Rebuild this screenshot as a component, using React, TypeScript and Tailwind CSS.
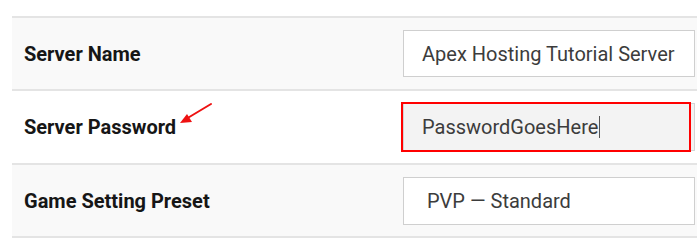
import React from "react";

const font = { fontFamily: "Roboto, 'Liberation Sans', sans-serif" };

export default function App() {
  return (
    <div className="w-[700px] h-[244px] bg-white overflow-hidden pt-[16px] pl-[12px]" style={font}>
      <div className="w-[685px] border-b-2 border-[#e4e4e4]">
        {/* Row 1 */}
        <div className="h-[73px] border-t-2 border-[#e4e4e4] bg-[#f9f9f9] flex items-center">
          <div className="w-[391px] pl-[12px] text-[20px] font-bold text-[#161616]">Server Name</div>
          <div className="w-[292px] h-[47px] bg-white border border-[#cfcfcf] flex items-center pl-[18px] text-[20px] text-[#3c3c3c] whitespace-nowrap">
            Apex Hosting Tutorial Server
          </div>
        </div>
        {/* Row 2 */}
        <div className="h-[74px] border-t-2 border-[#e4e4e4] bg-white flex items-center relative">
          <div className="w-[391px] pl-[12px] text-[20px] font-bold text-[#161616]">Server Password</div>
          <svg className="absolute left-[166px] top-[10px]" width="40" height="26" viewBox="0 0 40 26">
            <line x1="33" y1="3" x2="8" y2="18" stroke="#ee1111" strokeWidth="2" strokeLinecap="round" />
            <polygon points="2,22 9,13 14,21" fill="#ee1111" />
          </svg>
          <div className="relative w-[292px] h-[48px] bg-[#f3f3f3] border border-[#d4d4d4] flex items-center pl-[18px] text-[20px] text-[#3c3c3c] whitespace-nowrap">
            <span>PasswordGoesHere</span>
            <span className="inline-block w-[1px] h-[22px] bg-[#555] ml-[1px]" />
            <div className="absolute left-[-3px] top-[-2px] w-[290px] h-[50px] border-2 border-[#ff0000]" />
          </div>
        </div>
        {/* Row 3 */}
        <div className="h-[73px] border-t-2 border-[#e4e4e4] bg-[#f9f9f9] flex items-center">
          <div className="w-[391px] pl-[12px] text-[20px] font-bold text-[#161616]">Game Setting Preset</div>
          <div className="w-[292px] h-[48px] bg-white border border-[#cfcfcf] flex items-center pl-[23px] text-[20px] text-[#3c3c3c] whitespace-nowrap">
            PVP — Standard
          </div>
        </div>
      </div>
    </div>
  );
}
